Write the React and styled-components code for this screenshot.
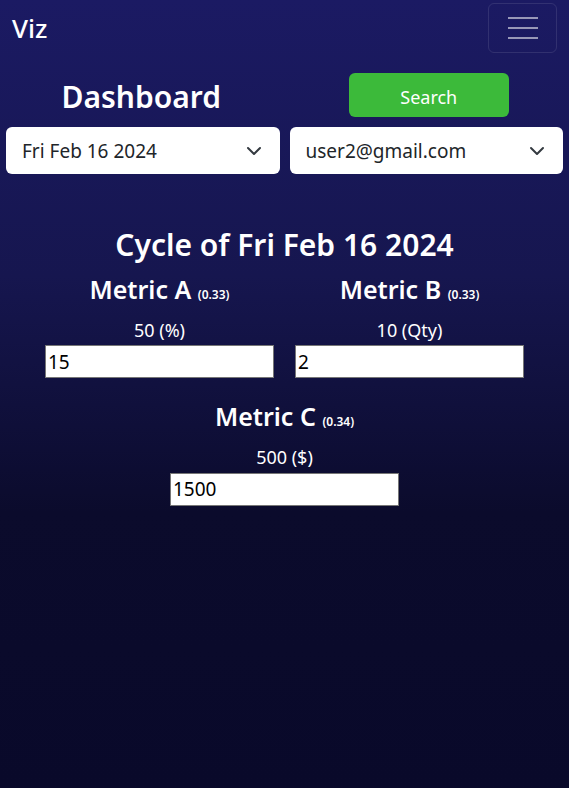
import React from 'react'
import styled, { createGlobalStyle } from 'styled-components'

const metrics = [
  { name: 'Metric A', weight: '0.33', target: '50 (%)', value: '15' },
  { name: 'Metric B', weight: '0.33', target: '10 (Qty)', value: '2' },
  { name: 'Metric C', weight: '0.34', target: '500 ($)', value: '1500' },
]

const Chevron = () => (
  <svg width="16" height="16" viewBox="0 0 16 16" fill="none">
    <path d="M2 5l6 6 6-6" stroke="#343a40" strokeWidth="2" strokeLinecap="round" strokeLinejoin="round" />
  </svg>
)

const App = () => {
  return (
    <>
      <GlobalStyle />
      <Page>
        <Navbar>
          <Brand>Viz</Brand>
          <Toggler aria-label="menu">
            <TogglerIcon>
              <span />
              <span />
              <span />
            </TogglerIcon>
          </Toggler>
        </Navbar>

        <TopRow>
          <Col>
            <Title>Dashboard</Title>
          </Col>
          <Col>
            <SearchButton>Search</SearchButton>
          </Col>
        </TopRow>

        <SelectRow>
          <Select>
            <span>Fri Feb 16 2024</span>
            <Chevron />
          </Select>
          <Select>
            <span>user2@gmail.com</span>
            <Chevron />
          </Select>
        </SelectRow>

        <Cycle>
          <CycleTitle>Cycle of Fri Feb 16 2024</CycleTitle>
          <MetricGrid>
            {metrics.map(m => (
              <Metric key={m.name}>
                <MetricName>
                  {m.name} <Weight>({m.weight})</Weight>
                </MetricName>
                <Target>{m.target}</Target>
                <ValueInput defaultValue={m.value} />
              </Metric>
            ))}
          </MetricGrid>
        </Cycle>
      </Page>
    </>
  )
}

const GlobalStyle = createGlobalStyle`
  * { box-sizing: border-box; }
  body {
    margin: 0;
    font-family: "Noto Sans", "Open Sans", sans-serif;
    background: #0a0a26;
  }
`

const Page = styled.div`
  min-height: 100vh;
  background: linear-gradient(180deg, #1b1a63 0%, #16164f 35%, #0b0b2c 65%, #09092a 100%);
  color: #fff;
`

const Navbar = styled.nav`
  display: flex;
  justify-content: space-between;
  align-items: center;
  padding: 3px 12px 0 12px;
  height: 56px;
`

const Brand = styled.div`
  font-size: 26px;
  font-weight: 500;
  color: #fff;
  margin-bottom: 3px;
`

const Toggler = styled.button`
  width: 69px;
  height: 50px;
  margin-top: -4px;
  background: transparent;
  border: 1px solid rgba(255, 255, 255, 0.1);
  border-radius: 6px;
  display: flex;
  align-items: center;
  justify-content: center;
  padding: 0;
`

const TogglerIcon = styled.div`
  width: 30px;
  display: flex;
  flex-direction: column;
  gap: 8px;

  span {
    display: block;
    height: 2px;
    background: rgba(255, 255, 255, 0.55);
  }
`

const TopRow = styled.div`
  display: grid;
  grid-template-columns: 1fr 1fr;
  align-items: end;
  margin-top: 17px;
`

const Col = styled.div`
  display: flex;
  justify-content: center;
`

const Title = styled.h1`
  margin: 0 0 2px -2px;
  font-size: 30px;
  font-weight: 600;
  line-height: 1.2;
`

const SearchButton = styled.button`
  width: 160px;
  height: 44px;
  margin-left: 4px;
  padding-top: 4px;
  background: #3cba3a;
  color: #fff;
  border: none;
  border-radius: 6px;
  font-family: inherit;
  font-size: 18px;
`

const SelectRow = styled.div`
  display: grid;
  grid-template-columns: 1fr 1fr;
  gap: 10px;
  padding: 10px 6px 0;
`

const Select = styled.div`
  height: 47px;
  background: #fff;
  color: #212529;
  border-radius: 6px;
  display: flex;
  align-items: center;
  justify-content: space-between;
  padding: 0 18px 0 16px;
  font-size: 19px;
`

const Cycle = styled.section`
  width: 500px;
  margin: 0 auto;
  padding-top: 53px;
`

const CycleTitle = styled.h2`
  margin: 0;
  text-align: center;
  font-size: 30px;
  font-weight: 600;
  line-height: 1.2;
`

const MetricGrid = styled.div`
  display: grid;
  grid-template-columns: 1fr 1fr;
  row-gap: 21px;
  margin-top: 9px;

  & > :nth-child(3) {
    grid-column: 1 / span 2;
  }
`

const Metric = styled.div`
  display: flex;
  flex-direction: column;
  align-items: center;
`

const MetricName = styled.h3`
  margin: 0;
  font-size: 25px;
  font-weight: 600;
  line-height: 1.4;
`

const Weight = styled.small`
  font-size: 12px;
  font-weight: 600;
`

const Target = styled.div`
  font-size: 18px;
  margin-top: 12px;
  line-height: 1.3;
`

const ValueInput = styled.input`
  width: 229px;
  height: 33px;
  margin-top: 3px;
  padding: 0 2px;
  border: 1px solid #767676;
  font-family: inherit;
  font-size: 19px;
  color: #000;
  background: #fff;
`

export default App
